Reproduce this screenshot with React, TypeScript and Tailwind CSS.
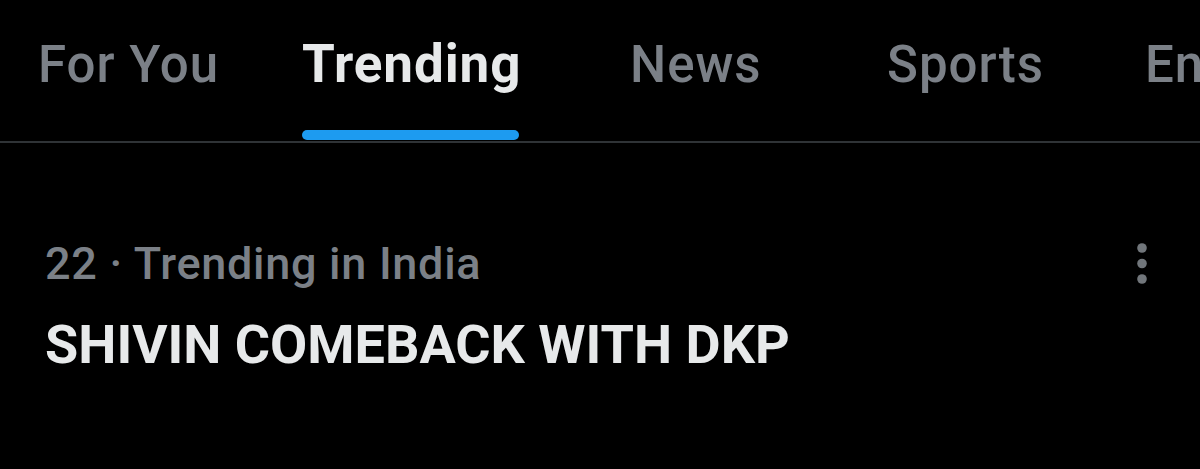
const tabs = [
  { label: 'For You', width: 'w-[264px]', active: false },
  { label: 'Trending', width: 'w-[328px]', active: true },
  { label: 'News', width: 'w-[257px]', active: false },
  { label: 'Sports', width: 'w-[258px]', active: false },
  { label: 'Entertainment', width: 'w-[300px]', active: false },
];

export default function App() {
  return (
    <div className="w-[1200px] h-[469px] overflow-hidden bg-black font-['Roboto','Liberation_Sans',sans-serif]">
      {/* tab strip */}
      <div className="flex h-[143px] pl-[38px] border-b-2 border-[#2f3336] whitespace-nowrap">
        {tabs.map((tab) => (
          <div key={tab.label} className={`${tab.width} shrink-0 flex`}>
            <div className="flex flex-col">
              {tab.active ? (
                <span className="pt-[34px] text-[53px] leading-[60px] font-bold tracking-[0.9px] text-[#e7e9ea]">
                  {tab.label}
                </span>
              ) : (
                <span className="pt-[35px] text-[51px] leading-[60px] font-medium tracking-[1px] text-[#7b8087]">
                  {tab.label}
                </span>
              )}
              {tab.active && <div className="mt-auto mb-[1px] mr-[2px] h-[10px] rounded-full bg-[#1d9bf0]" />}
            </div>
          </div>
        ))}
      </div>

      {/* trend row */}
      <div className="flex justify-between pl-[45px] pr-[53px] pt-[95px]">
        <div className="flex flex-col">
          <span className="text-[45px] leading-[52px] font-medium tracking-[0.7px] text-[#7b8087]">
            22 · Trending in India
          </span>
          <span className="mt-[25px] text-[54px] leading-[60px] font-bold text-[#e7e9ea]">
            SHIVIN COMEBACK WITH DKP
          </span>
        </div>
        <svg className="mt-[5px] w-[10px] h-[42px] shrink-0" viewBox="0 0 10 42" fill="#71767b">
          <circle cx="5" cy="5" r="4.8" />
          <circle cx="5" cy="20.5" r="4.8" />
          <circle cx="5" cy="36" r="4.8" />
        </svg>
      </div>
    </div>
  );
}
